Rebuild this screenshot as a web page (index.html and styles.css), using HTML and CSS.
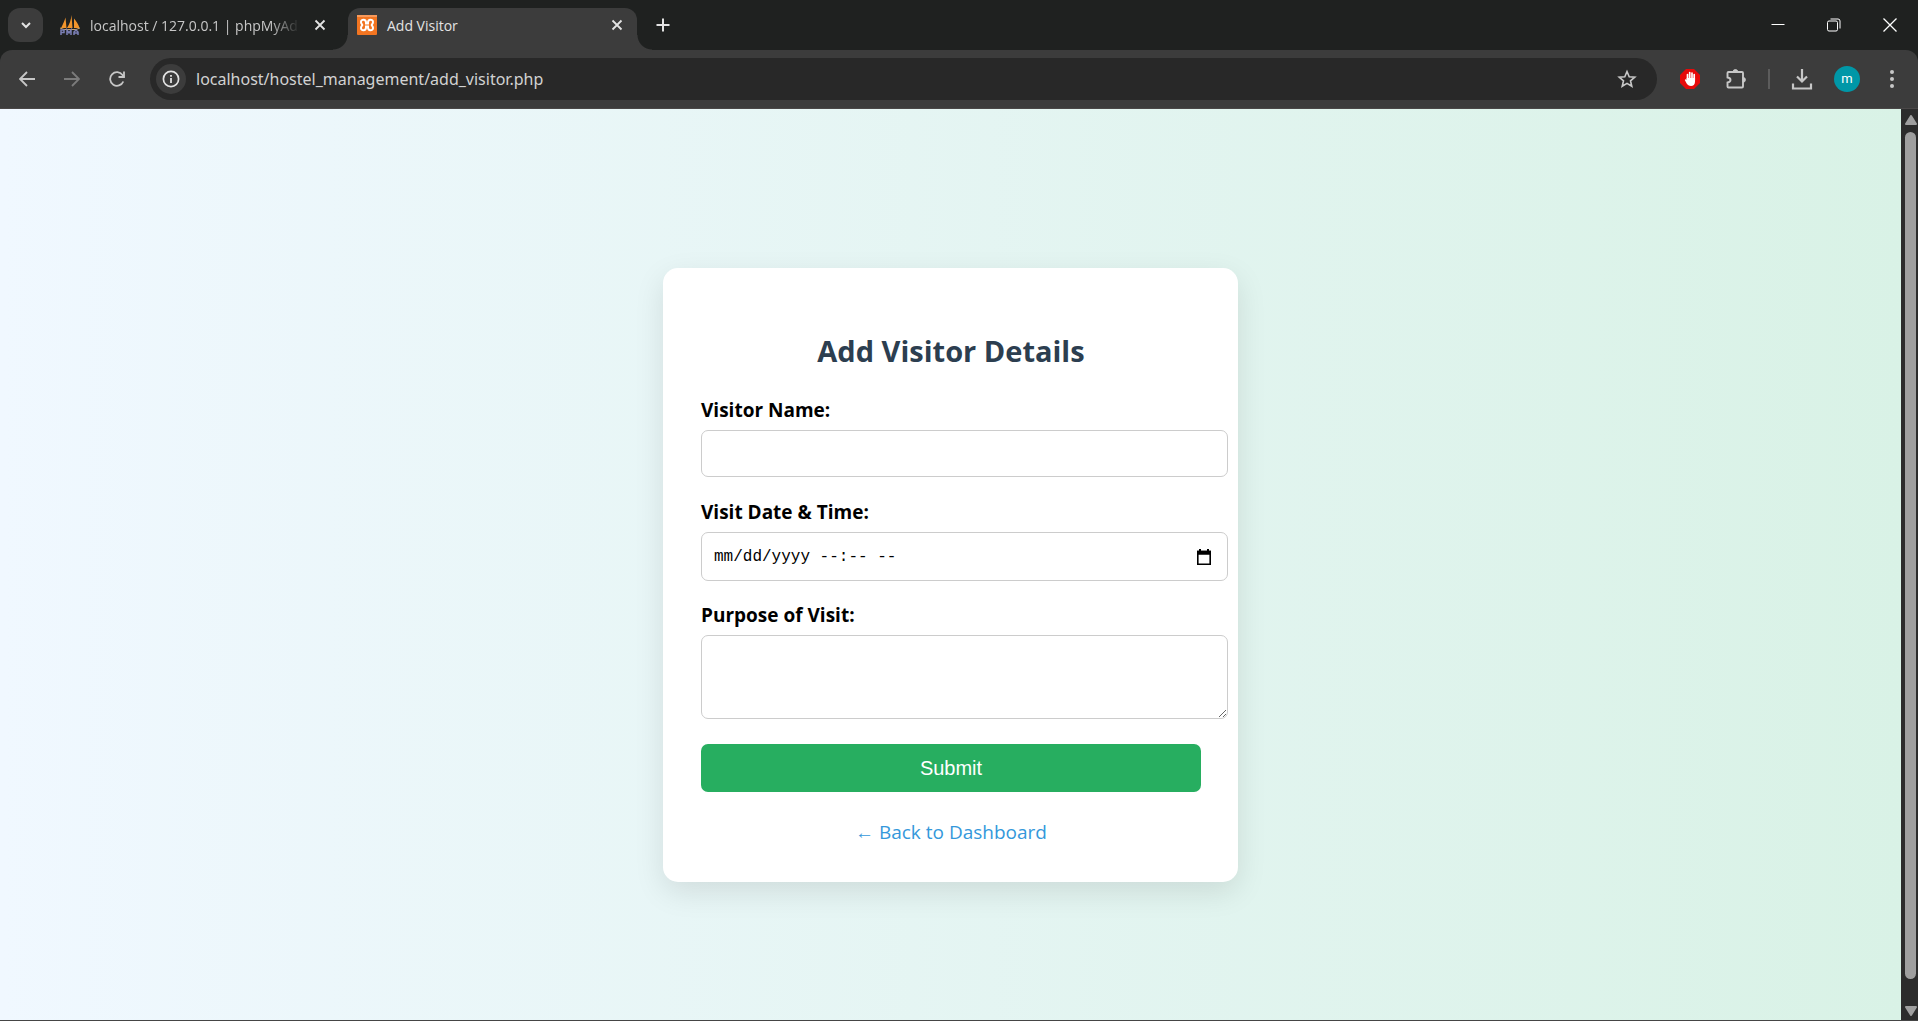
FILE: index.html
```html
<!DOCTYPE html>
<html lang="en">
<head>
<meta charset="utf-8">
<title>Add Visitor</title>
<link rel="stylesheet" href="styles.css">
</head>
<body>
<div class="window">
  <header class="tab-strip">
    <button class="tab-search" type="button" aria-label="Search tabs">
      <svg width="12" height="12" viewBox="0 0 12 12"><path d="M2 4l4 4 4-4" fill="none" stroke="currentColor" stroke-width="2"/></svg>
    </button>
    <div class="tab tab-idle">
      <svg class="favicon" width="20" height="20" viewBox="0 0 20 20">
        <path d="M1 13C3 9 4.500 6 5.500 2.500L6.500 13zM7 13C9.500 9 11 5 11.500 0L12.500 13zM14 13V3.500C16 6 18.500 9 19.500 13z" fill="#f2952c"/>
        <path d="M0 13l4 1.500h12l4-1.500" fill="none" stroke="#c9a36b"/>
        <path d="M1 20v-5h3v2.500H1M7 20v-5l2 3 2-3v5M14 20v-3l2-2 2 2v3M14 18h4" fill="none" stroke="#7b7fb5" stroke-width="1.500"/>
      </svg>
      <span class="tab-title tab-title-fade">localhost / 127.0.0.1 | phpMyAd</span>
      <button class="tab-close" type="button" aria-label="Close tab">
        <svg width="12" height="12" viewBox="0 0 12 12"><path d="M1.500 1.500l9 9M10.500 1.500l-9 9" stroke="currentColor" stroke-width="1.800"/></svg>
      </button>
    </div>
    <div class="tab tab-active">
      <svg class="favicon" width="20" height="20" viewBox="0 0 20 20">
        <rect width="20" height="20" rx="1" fill="#f37521"/>
        <rect width="20" height="2" fill="#f89a5c"/>
        <path d="M9 7.500C9 4 4 4 4 7c0 2 1.300 2 1.300 3S4 11 4 13c0 3 5 3 5-.500v-1h2v1c0 3.500 5 3.500 5 .500 0-2-1.300-2-1.300-3S16 9 16 7c0-3-5-3-5 .500v1H9z" fill="none" stroke="#fff" stroke-width="2"/>
      </svg>
      <span class="tab-title">Add Visitor</span>
      <button class="tab-close" type="button" aria-label="Close tab">
        <svg width="12" height="12" viewBox="0 0 12 12"><path d="M1.500 1.500l9 9M10.500 1.500l-9 9" stroke="currentColor" stroke-width="1.800"/></svg>
      </button>
    </div>
    <button class="new-tab" type="button" aria-label="New tab">
      <svg width="14" height="14" viewBox="0 0 14 14"><path d="M7 0.500v13M0.500 7h13" stroke="currentColor" stroke-width="2"/></svg>
    </button>
    <div class="window-controls">
      <button type="button" aria-label="Minimize"><svg width="14" height="14" viewBox="0 0 14 14"><path d="M0.500 6.500h13" stroke="currentColor"/></svg></button>
      <button type="button" aria-label="Restore"><svg width="14" height="14" viewBox="0 0 14 14" fill="none" stroke="currentColor"><rect x="0.500" y="3" width="10" height="10" rx="1.500"/><path d="M3.500 1h7.500a2 2 0 0 1 2 2v7.500"/></svg></button>
      <button type="button" aria-label="Close"><svg width="14" height="14" viewBox="0 0 14 14"><path d="M0.500 0.500l13 13M13.500 0.500l-13 13" stroke="currentColor" stroke-width="1.300"/></svg></button>
    </div>
  </header>

  <nav class="toolbar">
    <button class="tool" type="button" aria-label="Back"><svg width="16" height="16" viewBox="0 0 16 16"><path d="M16 8H1.500M8 1L1 8l7 7" fill="none" stroke="currentColor" stroke-width="1.800"/></svg></button>
    <button class="tool tool-off" type="button" aria-label="Forward"><svg width="16" height="16" viewBox="0 0 16 16"><path d="M0 8h14.500M8 1l7 7-7 7" fill="none" stroke="currentColor" stroke-width="1.800"/></svg></button>
    <button class="tool" type="button" aria-label="Reload"><svg width="16" height="16" viewBox="0 0 16 16"><path d="M14.300 10.500A6.800 6.800 0 1 1 13.500 4L15 6" fill="none" stroke="currentColor" stroke-width="1.800"/><path d="M15 0.500V6H9.500" fill="none" stroke="currentColor" stroke-width="1.800"/></svg></button>
    <div class="address">
      <button class="site-info" type="button" aria-label="Site information"><svg width="18" height="18" viewBox="0 0 18 18"><circle cx="9" cy="9" r="7.600" fill="none" stroke="currentColor" stroke-width="1.700"/><path d="M9 8v5M9 5v1.800" stroke="currentColor" stroke-width="1.800"/></svg></button>
      <input class="url" type="text" aria-label="Address" value="localhost/hostel_management/add_visitor.php">
      <button class="star" type="button" aria-label="Bookmark this page"><svg width="20" height="20" viewBox="0 0 20 20"><path d="M10 2.500l2.200 5.200 5.600 0.500-4.300 3.600 1.300 5.500L10 14.400l-4.800 2.900 1.300-5.500-4.300-3.600 5.600-0.500z" fill="none" stroke="currentColor" stroke-width="1.600"/></svg></button>
    </div>
    <div class="actions">
      <div class="extensions">
        <button class="tool" type="button" aria-label="Ad blocker"><svg width="20" height="20" viewBox="0 0 20 20"><path d="M6 0h8l6 6v8l-6 6H6l-6-6V6z" fill="#e60a0a"/><path d="M7.500 10.500V5.500M9.700 10V3.500M12 10V4M14.200 11V5.500" stroke="#fff" stroke-width="1.700" stroke-linecap="round"/><path d="M6.600 9h8.450v3.500c0 3-1.800 4.500-4 4.500s-3.400-1-4.400-2.500L4.800 11c.3-.9 1.200-.8 1.800 0z" fill="#fff"/></svg></button>
        <button class="tool" type="button" aria-label="Extensions"><svg width="22" height="22" viewBox="0 0 22 22"><path d="M3.500 4H17a1 1 0 0 1 1 1v13.500a1 1 0 0 1-1 1H3.500a1 1 0 0 1-1-1v-4c4-.5 4-4.500 0-5V5a1 1 0 0 1 1-1z" fill="none" stroke="currentColor" stroke-width="1.900"/><path d="M8 4a2.400 2.400 0 0 1 4.800 0zM18 9.400a2.400 2.400 0 0 1 0 4.800z" fill="currentColor" stroke="currentColor"/></svg></button>
      </div>
      <span class="divider"></span>
      <button class="tool" type="button" aria-label="Downloads"><svg width="22" height="22" viewBox="0 0 22 22"><path d="M11 1v12M6 8.500l5 5 5-5M2 15.500v5h18v-5" fill="none" stroke="currentColor" stroke-width="2.200"/></svg></button>
      <button class="avatar" type="button">m</button>
      <button class="tool" type="button" aria-label="Menu"><svg width="20" height="20" viewBox="0 0 20 20" fill="currentColor"><circle cx="10" cy="3" r="2"/><circle cx="10" cy="10" r="2"/><circle cx="10" cy="17" r="2"/></svg></button>
    </div>
  </nav>

  <div class="content">
    <main class="page">
      <section class="card">
        <h1 class="card-title">Add Visitor Details</h1>
        <form class="visitor-form">
          <label for="name">Visitor Name:</label>
          <input class="field field-name" id="name" type="text">
          <label for="when">Visit Date &amp; Time:</label>
          <div class="field field-date">
            <input class="date-input" id="when" type="text" placeholder="mm/dd/yyyy --:-- --">
            <button class="date-picker" type="button" aria-label="Show date picker"><svg width="16" height="18" viewBox="0 0 16 18"><path d="M1.800 3.500h12.400v12.700H1.800z" fill="none" stroke="#000" stroke-width="1.600"/><path d="M1 2.700h14v4H1zM3 1h2v3H3zM11 1h2v3h-2z"/></svg></button>
          </div>
          <label for="purpose">Purpose of Visit:</label>
          <textarea class="field field-purpose" id="purpose"></textarea>
          <button class="submit" type="submit">Submit</button>
        </form>
        <a class="back" href="#">← Back to Dashboard</a>
      </section>
    </main>
    <div class="scrollbar" aria-hidden="true">
      <svg width="12" height="10" viewBox="0 0 12 10"><path d="M6 1l5 8H1z" fill="#9f9f9f" stroke="#9f9f9f" stroke-width="2" stroke-linejoin="round"/></svg>
      <span class="thumb"></span>
      <svg width="12" height="10" viewBox="0 0 12 10"><path d="M6 9l5-8H1z" fill="#9f9f9f" stroke="#9f9f9f" stroke-width="2" stroke-linejoin="round"/></svg>
    </div>
  </div>
</div>
</body>
</html>
```
FILE: styles.css
```css
* { box-sizing: border-box; }

body {
  margin: 0;
  font-family: "Open Sans", "Noto Sans", sans-serif;
}

button {
  display: grid;
  place-items: center;
  flex: none;
  padding: 0;
  border: 0;
  background: none;
  color: inherit;
}

svg { display: block; flex: none; }

.window {
  display: flex;
  flex-direction: column;
  min-height: 100vh;
  background: #1f2120;
  border-bottom: 1px solid #454545;
}

/* Tab strip */
.tab-strip {
  display: flex;
  align-items: flex-start;
  height: 50px;
  padding: 8px 0 0 8px;
  color: #e3e3e3;
}

.tab-search {
  width: 35px;
  height: 34px;
  border-radius: 12px;
  background: #3c3c3c;
}

.tab {
  display: flex;
  align-items: center;
  height: 42px;
  padding: 0 10px 8px;
  font-size: 14px;
}

.tab-idle {
  width: 289px;
  margin: 0 9px 0 7px;
  padding-right: 9px;
  color: #c7c7c7;
}

.tab-active {
  position: relative;
  width: 289px;
  padding-left: 9px;
  border-radius: 12px 12px 0 0;
  background: #3c3c3c;
}

/* Outward curves at the foot of the active tab */
.tab-active::before,
.tab-active::after {
  content: "";
  position: absolute;
  bottom: 0;
  width: 15px;
  height: 15px;
}
.tab-active::before {
  right: 100%;
  background: radial-gradient(circle at 0 0, transparent 14px, #3c3c3c 15px);
}
.tab-active::after {
  left: 100%;
  background: radial-gradient(circle at 100% 0, transparent 14px, #3c3c3c 15px);
}

.tab-title {
  flex: 1;
  min-width: 0;
  margin: 0 10px;
  white-space: nowrap;
}
.tab-title-fade { mask-image: linear-gradient(to left, transparent, #000 30px); }

.tab-close { width: 20px; height: 20px; color: #e3e3e3; }

.new-tab { width: 34px; height: 34px; margin-left: 9px; }

.window-controls {
  display: flex;
  margin: -8px 0 0 auto;
  color: #fff;
}
.window-controls button { width: 56px; height: 49px; }

/* Toolbar */
.toolbar {
  display: flex;
  align-items: center;
  height: 59px;
  padding: 0 9px 1px 10px;
  gap: 11px;
  border-bottom: 1px solid #4a4747;
  border-radius: 12px 12px 0 0;
  background: #3c3c3c;
  color: #c7c7c7;
}

.tool { width: 34px; height: 34px; }
.tool-off { color: #7b7b7b; }

.address {
  display: flex;
  flex: 1;
  align-items: center;
  height: 42px;
  margin-left: 5px;
  padding: 0 13px 0 6px;
  border-radius: 21px;
  background: #282828;
}

.site-info {
  width: 30px;
  height: 30px;
  border-radius: 50%;
  background: #3c3c3c;
  color: #e3e3e3;
}

.url {
  flex: 1;
  min-width: 0;
  margin: 0 10px;
  padding: 0;
  border: 0;
  outline: 0;
  background: none;
  color: #d2d2d2;
  font: 16px/24px "Noto Sans", sans-serif;
}

.star { width: 34px; height: 34px; }

.actions {
  display: flex;
  align-items: center;
  margin-left: 5px;
  gap: 15px;
}

.extensions { display: flex; gap: 12px; }

.divider { width: 2px; height: 20px; background: #5c5c5c; }

.avatar {
  width: 26px;
  height: 26px;
  border-radius: 50%;
  background: #0097a7;
  color: #fff;
  font: 13px/16px Roboto, sans-serif;
}

/* Page content */
.content { display: flex; flex: 1; }

.page {
  display: flex;
  flex: 1;
  align-items: center;
  justify-content: center;
  padding: 41px 20px 20px;
  background: linear-gradient(to right, #f0f8ff, #d9f2e6);
}

.card {
  width: 575px;
  padding: 38px 37px 36px 38px;
  border-radius: 15px;
  background: #fff;
  box-shadow: 0 10px 30px rgba(0, 0, 0, 0.1);
}

.card-title {
  margin: 25px 0;
  color: #2c3e50;
  font-size: 29px;
  font-weight: 700;
  line-height: 40px;
  text-align: center;
}

.visitor-form { display: flex; flex-direction: column; }

.visitor-form label {
  margin-bottom: 6px;
  font-size: 19px;
  font-weight: 700;
  line-height: 28px;
}

.field {
  width: 527px;
  margin: 0 0 21px;
  padding: 12px;
  border: 1px solid #ccc;
  border-radius: 7px;
  background: #fff;
  color: #000;
  font: 16px/22px "Liberation Mono", monospace;
}
.field-name { height: 47px; }
.field-date {
  display: flex;
  align-items: center;
  height: 49px;
  margin-bottom: 20px;
  padding-right: 15px;
}
.field-purpose { height: 84px; margin-bottom: 25px; resize: vertical; }

.date-input {
  flex: 1;
  min-width: 0;
  padding: 0;
  border: 0;
  outline: 0;
  background: none;
  color: #000;
  font: inherit;
}
.date-input::placeholder { color: #000; }

.submit {
  height: 48px;
  border-radius: 7px;
  background: #27ae60;
  color: #fff;
  font: 20px/24px "Liberation Sans", Arial, sans-serif;
}

.back {
  display: block;
  margin-top: 26px;
  color: #3498db;
  font-size: 19px;
  line-height: 28px;
  text-align: center;
  text-decoration: none;
}

/* Scrollbar */
.scrollbar {
  display: flex;
  flex-direction: column;
  align-items: center;
  width: 17px;
  padding: 6px 0 4px 2px;
  gap: 7px;
  background: #2c2c2c;
}

.thumb {
  flex: 1;
  width: 11px;
  margin-bottom: 20px;
  border-radius: 6px;
  background: #9f9f9f;
}
```
